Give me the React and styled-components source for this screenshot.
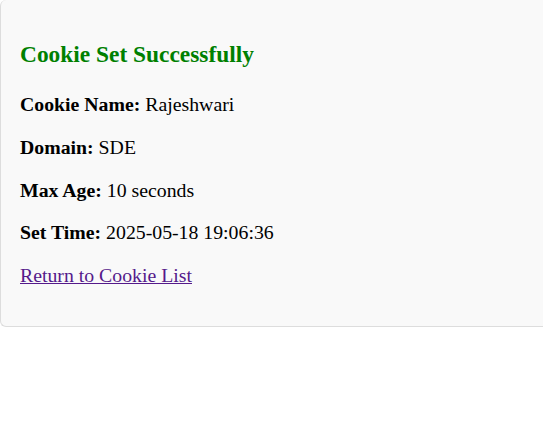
import styled, { createGlobalStyle } from 'styled-components';

const GlobalStyle = createGlobalStyle`
  html, body {
    margin: 0;
    padding: 0;
    background: #ffffff;
  }
  body {
    font-family: "Liberation Serif", "Times New Roman", serif;
    font-size: 18px;
    color: #000000;
  }
`;

const Card = styled.div`
  background: #f9f9f9;
  border: 1px solid #dddddd;
  border-top: none;
  border-right: none;
  border-radius: 6px 0 0 6px;
  padding: 21px 20px 19px 19px;
`;

const Title = styled.h2`
  color: #008000;
  font-size: 1.3em;
  font-weight: bold;
  margin: 20px 0 25px;
`;

const Row = styled.p`
  font-size: 1.1em;
  margin: 1em 0;
`;

const Label = styled.strong`
  font-weight: bold;
`;

const BackLink = styled.a`
  color: #551a8b;
  text-decoration: underline;
`;

const details = [
  { label: 'Cookie Name:', value: 'Rajeshwari' },
  { label: 'Domain:', value: 'SDE' },
  { label: 'Max Age:', value: '10 seconds' },
  { label: 'Set Time:', value: '2025-05-18 19:06:36' },
];

export const App = () => {
  return (
    <>
      <GlobalStyle />
      <Card>
        <Title>Cookie Set Successfully</Title>
        {details.map((d) => (
          <Row key={d.label}>
            <Label>{d.label}</Label> {d.value}
          </Row>
        ))}
        <Row>
          <BackLink href="#">Return to Cookie List</BackLink>
        </Row>
      </Card>
    </>
  );
};

export default App;
